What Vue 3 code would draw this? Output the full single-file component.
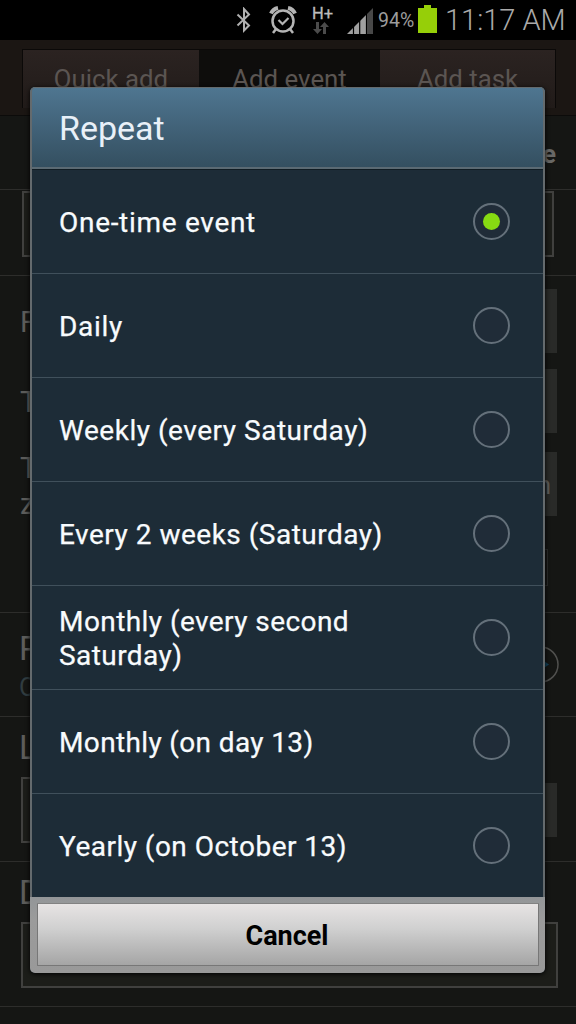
<script setup>
import { ref } from 'vue'

const options = [
  { label: 'One-time event', width: 240, spacing: 0.7 },
  { label: 'Daily', width: 90, spacing: 0.7 },
  { label: 'Weekly (every Saturday)', width: 340, spacing: 0.52 },
  { label: 'Every 2 weeks (Saturday)', width: 350, spacing: 0.5 },
  { label: 'Monthly (every second Saturday)', width: 309, spacing: 0.43 },
  { label: 'Monthly (on day 13)', width: 280, spacing: 0.36 },
  { label: 'Yearly (on October 13)', width: 320, spacing: 0.48 },
]
const selected = ref(0)
</script>

<template>
  <div class="screen">
    <header class="status">
      <svg class="bt" width="16" height="26" viewBox="0 0 16 26" fill="none" stroke="#b0b0b0" stroke-width="2">
        <path d="M1.500 7.500 13 18.500 8 23.500V2l5 5.500L1.500 18.500" />
      </svg>
      <svg class="alarm" width="28" height="28" viewBox="0 0 28 28" fill="none" stroke="#b4b4b4">
        <circle cx="14" cy="15" r="10.500" stroke-width="2.500" />
        <path d="m9.500 14 4 4 6-6" stroke-width="2.200" />
        <path d="M2 7.500Q4 3 9 2M19 2q5 1 7 5.500" stroke-width="4" />
        <path d="m7 23-3 4M21 23l3 4" stroke-width="2.500" />
      </svg>
      <div class="net">
        <span>H+</span>
        <svg width="16" height="12" viewBox="0 0 16 12" fill="#4b4b4b">
          <path d="M3 0h3v7h3l-4.500 5L0 7h3zM10 12h3V5h3l-4.500-5L7 5h3z" />
        </svg>
      </div>
      <svg class="signal" width="27" height="26" viewBox="0 0 27 26">
        <path d="M0 26 19.500 6.500V26z" fill="#a0a0a0" />
        <path d="M6.500 18v8M12.700 12v14M19.500 5v21" stroke="#000" stroke-width="1.200" />
        <path d="M20 26V6l6-6v26z" fill="#484848" />
      </svg>
      <span class="percent">94%</span>
      <svg class="battery" width="19" height="28" viewBox="0 0 19 28" fill="#96cf08">
        <path d="M6 0h7v3h6v25H0V3h6z" />
      </svg>
      <span class="clock">11:17 AM</span>
    </header>

    <nav class="topbar">
      <div class="tabs">
        <span class="tab">Quick add</span>
        <span class="tab active">Add event</span>
        <span class="tab">Add task</span>
      </div>
    </nav>

    <main class="form">
      <section class="actions"><b>e</b></section>
      <section class="title-row"><div class="field"></div></section>
      <section class="times">
        <div class="line from"><span>F</span><i class="pick"></i></div>
        <div class="line to"><span>T</span><i class="pick"></i></div>
        <div class="line zone"><span>T<br>z</span><i class="pick">n</i></div>
        <div class="check"></div>
      </section>
      <section class="repeat">
        <div><p class="caption">R</p><p class="value">O</p></div>
        <svg width="37" height="37" viewBox="0 0 37 37" fill="none">
          <circle cx="18.500" cy="18.500" r="17.500" stroke="#50504e" stroke-width="1.500" />
          <path d="m19 13 8 5.500-8 5.500z" fill="#12425b" />
        </svg>
      </section>
      <section class="location">
        <p class="caption">L</p>
        <div class="place"><div class="field"></div><i class="pick"></i></div>
      </section>
      <section class="description">
        <p class="caption">D</p>
        <div class="field"></div>
      </section>
    </main>

    <div class="dialog" role="dialog">
      <h1><span>Repeat</span></h1>
      <ul>
        <li v-for="(o, i) in options" :key="o.label" @click="selected = i">
          <span class="label" :style="{ width: o.width + 'px', letterSpacing: o.spacing + 'px' }">{{ o.label }}</span>
          <span class="radio" :class="{ on: selected === i }"></span>
        </li>
      </ul>
      <footer><button>Cancel</button></footer>
    </div>
  </div>
</template>

<style>
body { margin: 0; background: #151614; }
</style>

<style scoped>
* { box-sizing: border-box; }
.screen {
  position: relative; width: 576px; height: 1024px; overflow: hidden;
  background: #151614; font-family: Roboto, "Noto Sans", sans-serif; color: #5c5c5a;
}
p, h1, ul { margin: 0; padding: 0; font-weight: 400; }
.status { height: 40px; background: #000; display: flex; padding-left: 236px; color: #9c9c9c; }
.bt { margin-top: 7px; }
.alarm { margin: 6px 0 0 17px; }
.net { width: 22px; margin: 6px 0 0 15px; display: flex; flex-direction: column; }
.net span { font-size: 16.500px; line-height: 16px; color: #bbb; -webkit-text-stroke: 0.300px #bbb; }
.net svg { margin-left: 1px; }
.signal { margin: 8px 0 0 13px; }
.percent { width: 40px; margin-left: 4px; font-size: 19.500px; line-height: 41px; white-space: nowrap; }
.battery { margin-top: 5px; }
.clock { margin-left: 8px; font-size: 29px; line-height: 41px; white-space: nowrap; font-weight: 300; color: #aaa; }

.topbar { height: 76px; padding: 9px 20px 0 22px; background: #1b1613; border-bottom: 1px solid #0c0b0a; }
.tabs { height: 59px; display: grid; grid-template-columns: 176px 181px 1fr; border: 1px solid #0b0908; background: #2b2220; }
.tab { text-align: center; font-size: 25.800px; line-height: 58px; background: linear-gradient(#2b2321, #211b19); color: #5b5552; }
.tab.active { background: #0e0d0c; }

.form section { border-bottom: 1px solid #2d2d2b; }
.field { border: 2px solid #40403e; background: #1c1d19; height: 66px; }
.pick { width: 70px; height: 64px; background: #292a28; font-style: normal; font-size: 26px; line-height: 66px; text-align: right; padding-right: 6px; }
.actions { height: 74px; padding: 22px 20px 0; text-align: right; font-size: 26px; line-height: 32px; color: #686866; }
.title-row { height: 86px; padding: 1px 22px; }
.times { height: 337px; padding: 13px 19px 0 20px; }
.line { display: flex; justify-content: space-between; font-size: 29px; line-height: 36px; }
.line span { padding-top: 15px; }
.from { height: 80px; }
.to { height: 83px; }
.zone { height: 97px; }
.zone span { padding-top: 0; margin-top: -2px; }
.check { width: 37px; height: 37px; margin: 0 9px 0 auto; border: 1px solid #2c2d2b; }
.repeat { height: 104px; padding: 17px 17px 0 19px; display: flex; justify-content: space-between; }
.repeat svg { margin-top: 16px; }
.caption { font-size: 33px; line-height: 38px; }
.value { font-size: 25px; line-height: 40px; color: #303c40; }
.location { height: 145px; padding: 12px 19px 0 21px; }
.location .caption, .description .caption { margin-left: -2px; }
.place { display: flex; align-items: center; margin-top: 10px; }
.place .field { flex: 1; }
.place .pick { height: 54px; }
.description { height: 145px; padding: 12px 18px 0 21px; }
.description .field { margin-top: 10px; }

.dialog {
  position: absolute; left: 30px; top: 87px; width: 515px; height: 886px;
  border-radius: 5px; overflow: hidden; background: #1d2c37;
  box-shadow: 0 1px 5px #000; display: flex; flex-direction: column;
}
.dialog::after {
  content: ""; position: absolute; inset: 0 0 76px; pointer-events: none;
  border: solid #646a6d; border-width: 1px 2px 0; border-radius: 5px 5px 0 0;
}
h1 {
  height: 82px; padding-left: 29px; font-size: 34px; line-height: 83px; color: #e8f0f8;
  background: linear-gradient(#4f7691, #344f60); border-bottom: 2px solid #5b6a73;
}
ul { list-style: none; }
li {
  height: 104px; padding: 0 35px 0 29px; border-top: 1px solid #40505b;
  display: flex; align-items: center; justify-content: space-between;
  font-size: 28px; line-height: 34px; color: #f8fbfd; -webkit-text-stroke: 0.250px #f8fbfd;
}
li:first-child { border-top-color: #101c23; }
.label { white-space: nowrap; padding-top: 3px; }
li:nth-child(5) .label { white-space: normal; }
.radio {
  width: 37px; height: 37px; border: 2px solid #64707a; border-radius: 50%;
  background: #202c38; display: grid; place-items: center;
}
.radio.on::before { content: ""; width: 17px; height: 17px; border-radius: 50%; background: #86da12; }
footer { height: 76px; padding: 6px 6px 7px 7px; background: linear-gradient(#939698, #9b9b9b 30%, #999); }
button {
  width: 100%; height: 63px; padding: 1px 2px 0 0; border: 1px solid #777; border-top-color: #828282; border-radius: 1px;
  background: linear-gradient(#e7e4e4, #d0d0d0 40%, #a5a5a5);
  font: 700 27px/62px Roboto, sans-serif; color: #000;
}
</style>
